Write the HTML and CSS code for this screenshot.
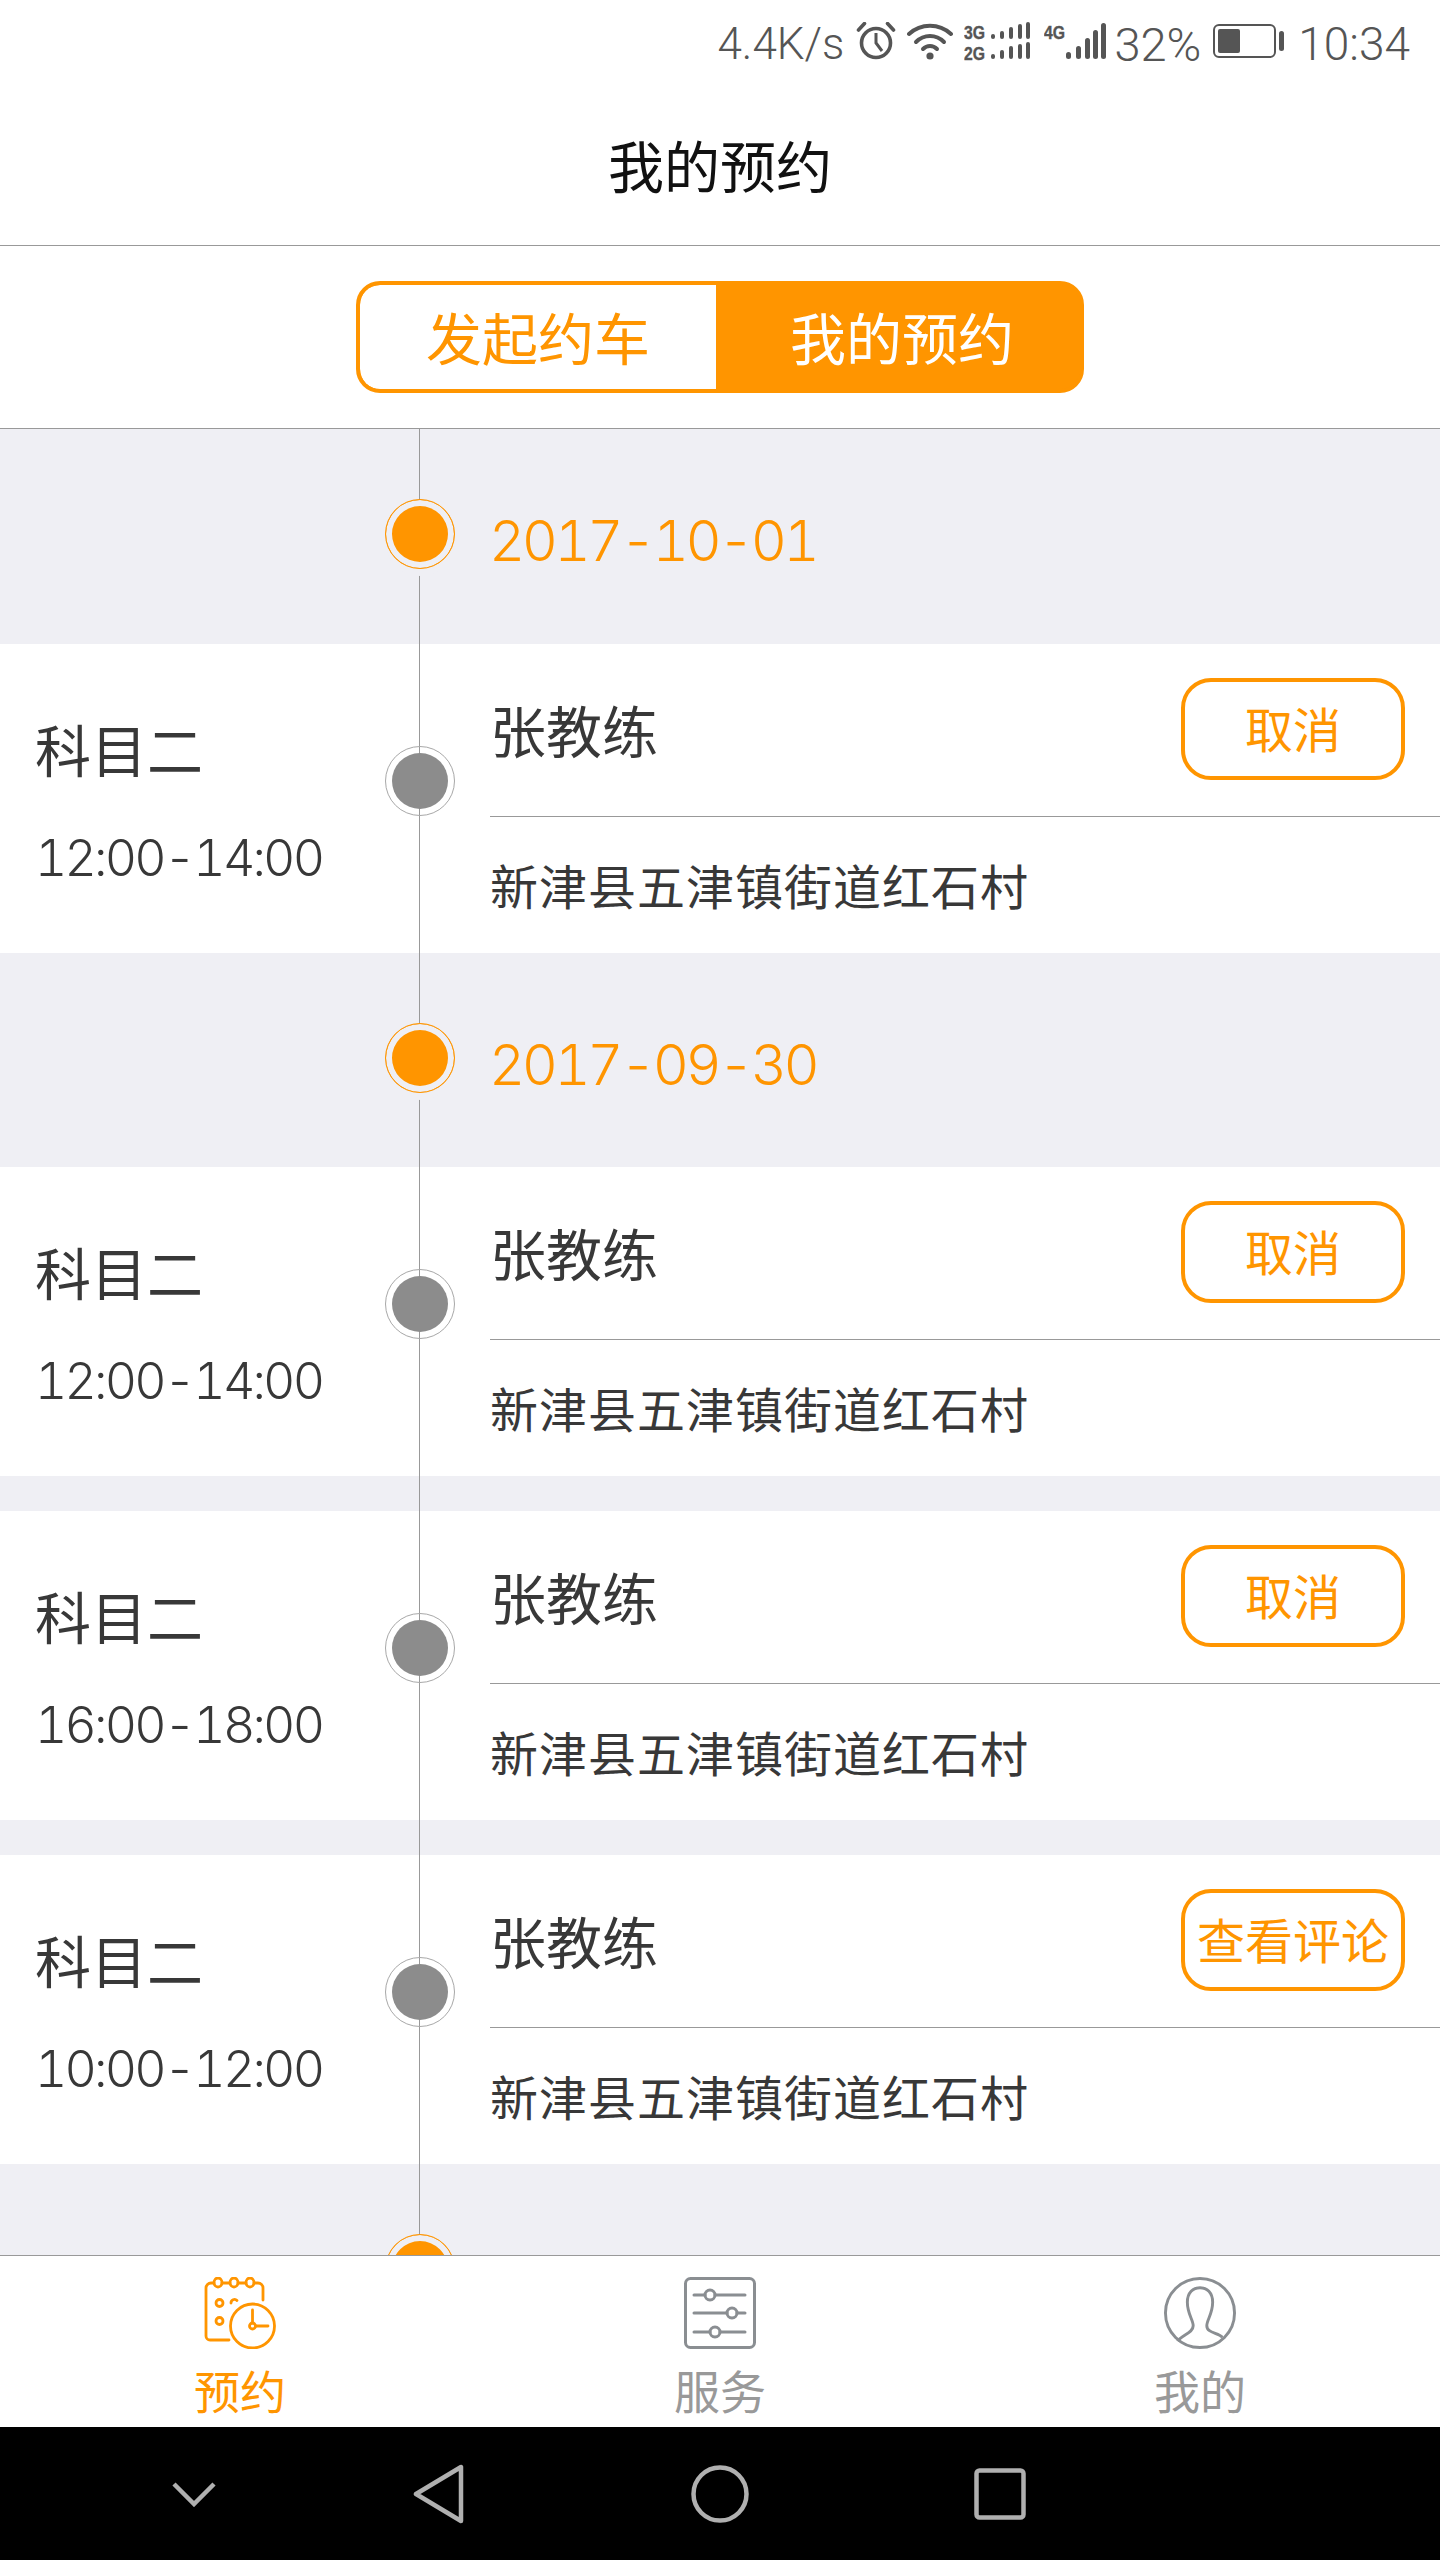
FILE: index.html
```html
<!DOCTYPE html>
<html lang="zh-CN">
<head>
  <meta charset="UTF-8">
  <title>我的预约</title>
  <link rel="stylesheet" href="styles.css">
</head>
<body>
<div class="app">

  <div class="status-bar">
    <span class="speed">4.4K/s</span>
    <svg class="ic-alarm" width="40" height="38" viewBox="0 0 40 38"><g fill="none" stroke="#555" stroke-width="3.6"><circle cx="20" cy="21" r="14.5"/><path d="M20 11v10l6 8" stroke-width="3"/><path d="M2.5 8l6-6.500M37.500 8l-6-6.500" stroke-linecap="round"/></g></svg>
    <svg class="ic-wifi" width="46" height="38" viewBox="0 0 46 38"><g fill="none" stroke="#555" stroke-width="4" stroke-linecap="round"><path d="M2 12C14 1 32 1 44 12"/><path d="M9 20C17 12 29 12 37 20"/><path d="M16 27C20 23 26 23 30 27"/></g><circle cx="23" cy="34" r="3.600" fill="#555"/></svg>
    <svg class="ic-dual" width="66" height="42" viewBox="0 0 66 42">
      <text class="net-label" x="0" y="16.500" textLength="21" lengthAdjust="spacingAndGlyphs">3G</text>
      <text class="net-label" x="0" y="37.500" textLength="21" lengthAdjust="spacingAndGlyphs">2G</text>
      <g fill="#555">
        <rect x="27" y="12" width="4" height="5" rx="2"/><rect x="36" y="9" width="4" height="8" rx="2"/><rect x="45" y="5" width="4" height="12" rx="2"/><rect x="62" y="0" width="4" height="17" rx="2"/><rect x="54" y="2" width="4" height="15" rx="2"/>
        <rect x="27" y="32" width="4" height="5" rx="2"/><rect x="36" y="28" width="4" height="9" rx="2"/><rect x="45" y="24" width="4" height="13" rx="2"/><rect x="54" y="22" width="4" height="15" rx="2"/><rect x="62" y="20" width="4" height="17" rx="2"/>
      </g>
    </svg>
    <svg class="ic-lte" width="62" height="42" viewBox="0 0 62 42">
      <text class="net-label" x="0" y="16.500" textLength="21" lengthAdjust="spacingAndGlyphs">4G</text>
      <g fill="#555">
        <rect x="22" y="30" width="5" height="7" rx="2.500"/><rect x="32" y="24" width="5" height="13" rx="2.500"/><rect x="41" y="16" width="5" height="21" rx="2.500"/><rect x="49" y="8" width="5" height="29" rx="2.500"/><rect x="57" y="1" width="5" height="36" rx="2.500"/>
      </g>
    </svg>
    <span class="percent">32%</span>
    <svg class="ic-battery" width="71" height="34" viewBox="0 0 71 34"><rect x="1" y="1" width="61" height="32" rx="5" fill="none" stroke="#555" stroke-width="2"/><rect x="5" y="5" width="22" height="24" rx="2" fill="#555"/><rect x="66" y="7" width="5" height="20" rx="2.500" fill="#555"/></svg>
    <span class="clock">10:34</span>
  </div>

  <header class="title-bar">我的预约</header>

  <div class="segment-wrap">
    <div class="segment">
      <div class="segment-item">发起约车</div>
      <div class="segment-item active">我的预约</div>
    </div>
  </div>

  <main class="list">

    <div class="date-row">
      <span class="dot dot-date"></span>
      <span class="date">2017-10-01</span>
    </div>

    <div class="lesson">
      <div class="lesson-left">
        <div class="subject">科目二</div>
        <div class="time">12:00-14:00</div>
      </div>
      <div class="dot-cell"><span class="dot dot-grey"></span></div>
      <div class="lesson-main">
        <div class="lesson-top">
          <span class="coach">张教练</span>
          <button class="btn">取消</button>
        </div>
        <div class="address">新津县五津镇街道红石村</div>
      </div>
    </div>

    <div class="date-row">
      <span class="dot dot-date"></span>
      <span class="date">2017-09-30</span>
    </div>

    <div class="lesson">
      <div class="lesson-left">
        <div class="subject">科目二</div>
        <div class="time">12:00-14:00</div>
      </div>
      <div class="dot-cell"><span class="dot dot-grey"></span></div>
      <div class="lesson-main">
        <div class="lesson-top">
          <span class="coach">张教练</span>
          <button class="btn">取消</button>
        </div>
        <div class="address">新津县五津镇街道红石村</div>
      </div>
    </div>

    <div class="lesson">
      <div class="lesson-left">
        <div class="subject">科目二</div>
        <div class="time">16:00-18:00</div>
      </div>
      <div class="dot-cell"><span class="dot dot-grey"></span></div>
      <div class="lesson-main">
        <div class="lesson-top">
          <span class="coach">张教练</span>
          <button class="btn">取消</button>
        </div>
        <div class="address">新津县五津镇街道红石村</div>
      </div>
    </div>

    <div class="lesson">
      <div class="lesson-left">
        <div class="subject">科目二</div>
        <div class="time">10:00-12:00</div>
      </div>
      <div class="dot-cell"><span class="dot dot-grey"></span></div>
      <div class="lesson-main">
        <div class="lesson-top">
          <span class="coach">张教练</span>
          <button class="btn">查看评论</button>
        </div>
        <div class="address">新津县五津镇街道红石村</div>
      </div>
    </div>

    <div class="date-row">
      <span class="dot dot-date"></span>
      <span class="date">2017-09-29</span>
    </div>

  </main>

  <nav class="tab-bar">
    <div class="tab active">
      <svg width="72" height="72" viewBox="0 0 72 72"><g fill="none" stroke="#ff9500" stroke-width="2.800" stroke-linecap="round">
        <path d="M10 6H7a5 5 0 0 0-5 5V59a4 4 0 0 0 4 4H25"/>
        <path d="M18 6h8M34 6h8M50 6h4a5 5 0 0 1 5 5V23"/>
        <ellipse cx="14" cy="5.500" rx="4" ry="4.500"/><ellipse cx="30" cy="5.500" rx="4" ry="4.500"/><ellipse cx="46" cy="5.500" rx="4" ry="4.500"/>
        <circle cx="15.500" cy="26" r="3.500"/><path d="M27 26a3.500 3.500 0 0 1 6-2.500"/><circle cx="15.500" cy="44" r="3.500"/>
        <circle cx="48.500" cy="49" r="22"/><path d="M48.500 33V46M52 49H64"/><circle cx="48.500" cy="49" r="3"/>
      </g></svg>
      <span class="tab-label">预约</span>
    </div>
    <div class="tab">
      <svg width="72" height="72" viewBox="0 0 72 72"><g fill="none" stroke="#8a8e92" stroke-width="3">
        <rect x="1.500" y="1.500" width="69" height="69" rx="5"/>
        <path d="M10 18H21M31 18H61M10 36H43M53 36H61M10 55H26M36 55H61" stroke-linecap="round"/>
        <circle cx="26" cy="18" r="5"/><circle cx="48" cy="36" r="5"/><circle cx="31" cy="55" r="5"/>
      </g></svg>
      <span class="tab-label">服务</span>
    </div>
    <div class="tab">
      <svg width="74" height="74" viewBox="0 0 74 74"><g fill="none" stroke="#8a8e92" stroke-width="3">
        <circle cx="37" cy="37" r="35.500"/>
        <path d="M14 66C18 59 30 58 30 50C30 44 24 38 24 26C24 16 30 11 37 11C44 11 50 16 50 26C50 38 44 44 44 50C44 58 56 57 60 62"/>
      </g></svg>
      <span class="tab-label">我的</span>
    </div>
  </nav>

  <div class="nav-bar">
    <svg class="nav-down" width="44" height="26" viewBox="0 0 44 26"><path d="M2 3L22 23L42 3" fill="none" stroke="#b0b0b0" stroke-width="4.500"/></svg>
    <svg class="nav-back" width="52" height="60" viewBox="0 0 52 60"><path d="M48 3V57L3 30Z" fill="none" stroke="#b0b0b0" stroke-width="4.500" stroke-linejoin="round"/></svg>
    <svg class="nav-home" width="58" height="58" viewBox="0 0 58 58"><circle cx="29" cy="29" r="26.500" fill="none" stroke="#b0b0b0" stroke-width="4.500"/></svg>
    <svg class="nav-recent" width="52" height="52" viewBox="0 0 52 52"><rect x="2.500" y="2.500" width="47" height="47" rx="3" fill="none" stroke="#b0b0b0" stroke-width="4.500"/></svg>
  </div>

</div>
</body>
</html>
```
FILE: styles.css
```css
* { box-sizing: border-box; margin: 0; padding: 0; }
body {
  font-family: "Noto Sans CJK SC", sans-serif;
  font-weight: 400;
  background: #fff;
  color: #383838;
}

.app {
  display: flex;
  flex-direction: column;
  width: 1440px;
  height: 2560px;
  overflow: hidden;
}

/* status bar */
.status-bar {
  display: flex;
  justify-content: flex-end;
  align-items: center;
  height: 88px;
  padding-right: 30px;
  font-family: Roboto, sans-serif;
  font-weight: 300;
  font-size: 46px;
  color: #555;
}
.status-bar svg { flex: none; margin-top: -6px; }
.status-bar .ic-dual,
.status-bar .ic-lte { margin-top: -2px; }
.speed { font-size: 44px; }
.net-label {
  font-family: "Liberation Sans", sans-serif;
  font-weight: 700;
  font-size: 18px;
  fill: #555;
  stroke: #555;
  stroke-width: 0.4;
}
.ic-alarm { margin-left: 12px; }
.ic-wifi { margin-left: 11px; }
.ic-dual { margin-left: 11px; }
.ic-lte { margin-left: 14px; }
.percent { margin-left: 8px; font-size: 47px; }
.ic-battery { margin-left: 12px; }
.clock { margin-left: 14px; }

.title-bar {
  height: 158px;
  padding-bottom: 6px;
  border-bottom: 1px solid #999;
  display: flex;
  align-items: center;
  justify-content: center;
  font-size: 56px;
  color: #111;
}

/* switch */
.segment-wrap {
  height: 183px;
  padding-top: 35px;
  border-bottom: 1px solid #999;
}
.segment {
  display: flex;
  width: 728px;
  height: 112px;
  margin-left: 356px;
  border: 4px solid #ff9500;
  border-radius: 24px;
  background: #ff9500;
  overflow: hidden;
}
.segment-item {
  display: flex;
  align-items: center;
  justify-content: center;
  width: 356px;
  padding-bottom: 4px;
  font-size: 56px;
  background: #fff;
  color: #ff9500;
  border-radius: 20px 0 0 20px;
}
.segment-item.active {
  flex: 1;
  padding-left: 8px;
  background: #ff9500;
  color: #fff;
  border-radius: 0;
}

/* timeline list */
.list {
  flex: 1;
  min-height: 0;
  overflow: hidden;
  position: relative;
  background: #efeff4;
}
.list::before {
  content: "";
  position: absolute;
  left: 419px;
  top: 0;
  bottom: 0;
  width: 1px;
  background: #999;
}

.dot {
  display: block;
  position: relative;
  flex: none;
  width: 70px;
  height: 70px;
  border-radius: 50%;
}
.dot-date {
  background: #ff9500;
  border: 1px solid #ff9500;
  box-shadow: inset 0 0 0 6px #efeff4, 0 7px 0 #efeff4;
}
.dot-grey {
  background: #8c8c8c content-box;
  border: 1px solid #a8a8a8;
  padding: 6px;
}

.date-row {
  display: flex;
  align-items: flex-start;
  height: 214px;
  padding: 70px 0 0 385px;
}
.date-row:first-child { height: 215px; }
.date {
  position: relative;
  margin-left: 34px;
  font-family: Inter, sans-serif;
  font-weight: 300;
  font-size: 56px;
  line-height: 84px;
  font-variant-numeric: tabular-nums;
  letter-spacing: -3.500px;
  color: #ff9500;
}

.lesson {
  display: flex;
  height: 309px;
  background: #fff;
}
.lesson + .lesson { margin-top: 35px; }

.lesson-left {
  width: 385px;
  padding: 64px 0 0 35px;
}
.subject {
  font-size: 56px;
  line-height: 80px;
}
.time {
  margin-top: 30px;
  font-family: Inter, sans-serif;
  font-weight: 300;
  font-size: 50px;
  line-height: 80px;
  font-variant-numeric: tabular-nums;
  letter-spacing: -2.800px;
}

.dot-cell {
  width: 70px;
  padding-top: 102px;
}

.lesson-main {
  flex: 1;
  margin-left: 35px;
}
.lesson-top {
  display: flex;
  align-items: center;
  justify-content: space-between;
  height: 173px;
  padding: 0 35px 2px 0;
  border-bottom: 1px solid #999;
}
.coach {
  padding-bottom: 2px;
  font-size: 56px;
}
.btn {
  width: 224px;
  height: 102px;
  padding-bottom: 4px;
  border: 4px solid #ff9500;
  border-radius: 30px;
  background: #fff;
  color: #ff9500;
  font-family: inherit;
  font-weight: inherit;
  font-size: 48px;
}
.address {
  display: flex;
  align-items: center;
  height: 136px;
  padding-bottom: 2px;
  font-size: 48px;
  letter-spacing: 1px;
}

/* bottom tabs */
.tab-bar {
  display: grid;
  grid-template-columns: repeat(3, 480px);
  height: 172px;
  border-top: 1px solid #999;
  background: #fff;
  position: relative;
}
.tab {
  display: flex;
  flex-direction: column;
  align-items: center;
  padding-top: 21px;
}
.tab svg { height: 72px; }
.tab-label {
  margin-top: 15px;
  font-size: 46px;
  line-height: 50px;
  color: #999;
}
.tab.active .tab-label { color: #ff9500; }

/* android keys */
.nav-bar {
  display: flex;
  align-items: center;
  height: 133px;
  padding-left: 172px;
  background: #000;
}
.nav-back { margin-left: 197px; }
.nav-home { margin-left: 226px; }
.nav-recent { margin-left: 225px; }
```
